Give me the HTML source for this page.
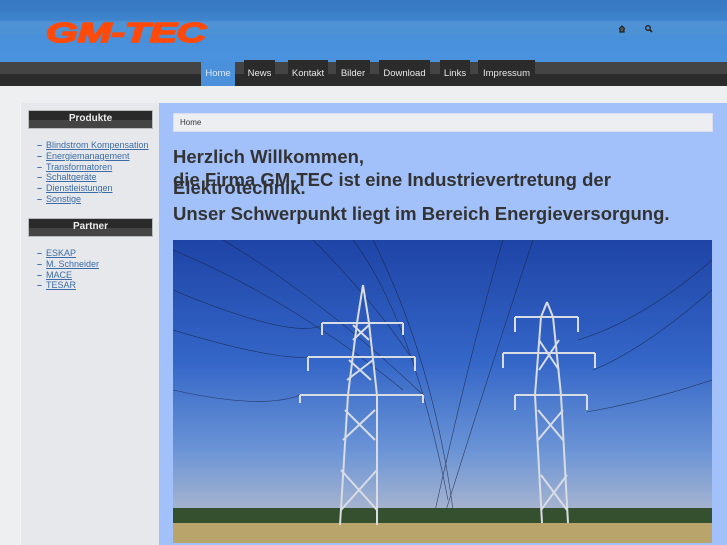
<!DOCTYPE html>
<html><head><meta charset="utf-8"><style>
*{margin:0;padding:0;box-sizing:border-box}
body{width:727px;height:545px;overflow:hidden;background:#eeeff1;font-family:"Liberation Sans",sans-serif;position:relative}
.hdr{position:absolute;left:0;top:0;width:727px;height:62px;background:linear-gradient(#3878c2 0,#3a7dc6 10px,#3e84cc 20px,#4f92d6 22px,#4e92d6 34px,#4890da 36px,#4a92de 62px)}
.logo{position:absolute;left:46px;top:17px;color:#ff4a0a;font:italic 900 28px "Liberation Sans",sans-serif;transform:scaleX(1.45);transform-origin:left;-webkit-text-stroke:1.6px #ff4a0a}
.nav{position:absolute;left:0;top:62px;width:727px;height:24px;background:linear-gradient(#444 0,#444 12px,#2b2b2b 12px)}
.tab{position:absolute;top:60px;height:26px;background:#2b2b2b;color:#e8e8e8;font-size:9.5px;line-height:27px;text-align:center}
.tab.on{background:#4a90da;top:62px;height:24px;line-height:23px;color:#dfeaf8}
.side{position:absolute;left:20px;top:103px;width:139px;height:442px;background:#e6e8eb;border-left:1px solid #f4f4f4}
.bh{position:absolute;left:7px;width:125px;height:19px;background:linear-gradient(#2a2a2a 0,#2a2a2a 9px,#444 9px);color:#eee;font-weight:bold;font-size:10px;text-align:center;line-height:15px;border:1px solid #bbb}
.ul{position:absolute;left:16px;font-size:9px;line-height:10.8px;color:#3c6ca8}
.ul div:before{content:"–";text-decoration:none;display:inline-block;width:9px;color:#3c6ca8;font-weight:bold}
.ul span{text-decoration:underline}
.main{position:absolute;left:159px;top:103px;width:568px;height:442px;background:#a2c1fa}
.bc{position:absolute;left:173px;top:113px;width:540px;height:19px;background:#eceef1;border:1px solid #dde;font-size:8px;color:#333;padding-left:6px;line-height:17px}
h1{position:absolute;left:173px;font-size:18.5px;color:#333;font-weight:bold;white-space:nowrap}
</style></head><body>
<div class="hdr"></div>
<div class="logo">GM-TEC</div>
<svg style="position:absolute;left:617px;top:23px" width="40" height="12"><path d="M2 6 L5 3 L8 6 M3 6 V9 H7 V6" stroke="#222" fill="#555" stroke-width="1.2"/><circle cx="31" cy="5" r="2.3" stroke="#222" fill="none" stroke-width="1.3"/><path d="M32.5 6.5 L35 9" stroke="#222" stroke-width="1.6"/></svg>
<div class="nav"></div>
<div class="tab on" style="left:201px;width:34px">Home</div>
<div class="tab" style="left:244px;width:31px">News</div>
<div class="tab" style="left:288px;width:40px">Kontakt</div>
<div class="tab" style="left:336px;width:34px">Bilder</div>
<div class="tab" style="left:379px;width:51px">Download</div>
<div class="tab" style="left:440px;width:30px">Links</div>
<div class="tab" style="left:478px;width:57px">Impressum</div>
<div class="side">
<div class="bh" style="top:7px">Produkte</div>
<div class="ul" style="top:37px"><div><span>Blindstrom Kompensation</span></div><div><span>Energiemanagement</span></div><div><span>Transformatoren</span></div><div><span>Schaltgeräte</span></div><div><span>Dienstleistungen</span></div><div><span>Sonstige</span></div></div>
<div class="bh" style="top:115px">Partner</div>
<div class="ul" style="top:145px"><div><span>ESKAP</span></div><div><span>M. Schneider</span></div><div><span>MACE</span></div><div><span>TESAR</span></div></div>
</div>
<div class="main"></div>
<div class="bc">Home</div>
<h1 style="top:146px">Herzlich Willkommen,</h1>
<h1 style="top:169px">die Firma GM-TEC ist eine Industrievertretung der</h1>
<h1 style="top:177px">Elektrotechnik.</h1>
<h1 style="top:203px">Unser Schwerpunkt liegt im Bereich Energieversorgung.</h1>
<svg style="position:absolute;left:173px;top:240px" width="539" height="303" viewBox="0 0 539 303">
<defs><linearGradient id="s" x1="0" y1="0" x2="0" y2="1"><stop offset="0" stop-color="#1e44a6"/><stop offset=".4" stop-color="#3466c8"/><stop offset=".7" stop-color="#6c95d6"/><stop offset=".9" stop-color="#a9b5cf"/></linearGradient></defs>
<rect width="539" height="303" fill="url(#s)"/>
<g stroke="#1a2440" stroke-width=".6" fill="none" opacity=".8">
<path d="M0 10 Q120 60 230 150"/><path d="M50 0 Q150 60 250 155"/><path d="M140 0 Q200 60 240 120"/><path d="M0 50 Q120 100 150 85"/><path d="M0 90 Q100 120 135 117"/><path d="M180 0 Q240 80 275 260"/><path d="M200 0 Q260 120 280 270"/><path d="M330 0 Q300 100 260 280"/><path d="M360 0 Q320 120 270 280"/><path d="M539 20 Q470 80 405 100"/><path d="M539 50 Q470 110 420 130"/><path d="M539 140 Q480 160 414 172"/><path d="M0 150 Q90 170 127 155"/>
</g>
<rect y="268" width="539" height="17" fill="#34502f"/>
<rect y="283" width="539" height="20" fill="#b9a56c"/>
<g stroke="#d8dce4" stroke-width="2" fill="none">
<path d="M190 45 L184 83 L175 155 L167 285 M190 45 L196 83 L204 155 L204 285"/>
<path d="M149 83 H230 M135 117 H242 M127 155 H250"/>
<path d="M168 270 L204 230 M168 230 L204 270 M170 200 L202 170 M172 170 L202 200 M174 140 L200 120 M176 120 L198 140 M180 100 L196 85 M180 85 L196 100"/>
<path d="M149 83 v12 M230 83 v12 M135 117 v14 M242 117 v14 M127 155 v8 M250 155 v8"/>
<path d="M374 62 L368 77 L362 155 L369 283 M374 62 L380 77 L388 155 L395 283"/>
<path d="M342 77 H405 M330 113 H422 M342 155 H414"/>
<path d="M368 270 L394 235 M368 235 L394 270 M365 200 L390 170 M365 170 L390 200 M366 130 L386 100 M366 100 L386 130"/>
<path d="M342 77 v15 M405 77 v15 M330 113 v15 M422 113 v15 M342 155 v15 M414 155 v15"/>
</g>
</svg>
</body></html>
